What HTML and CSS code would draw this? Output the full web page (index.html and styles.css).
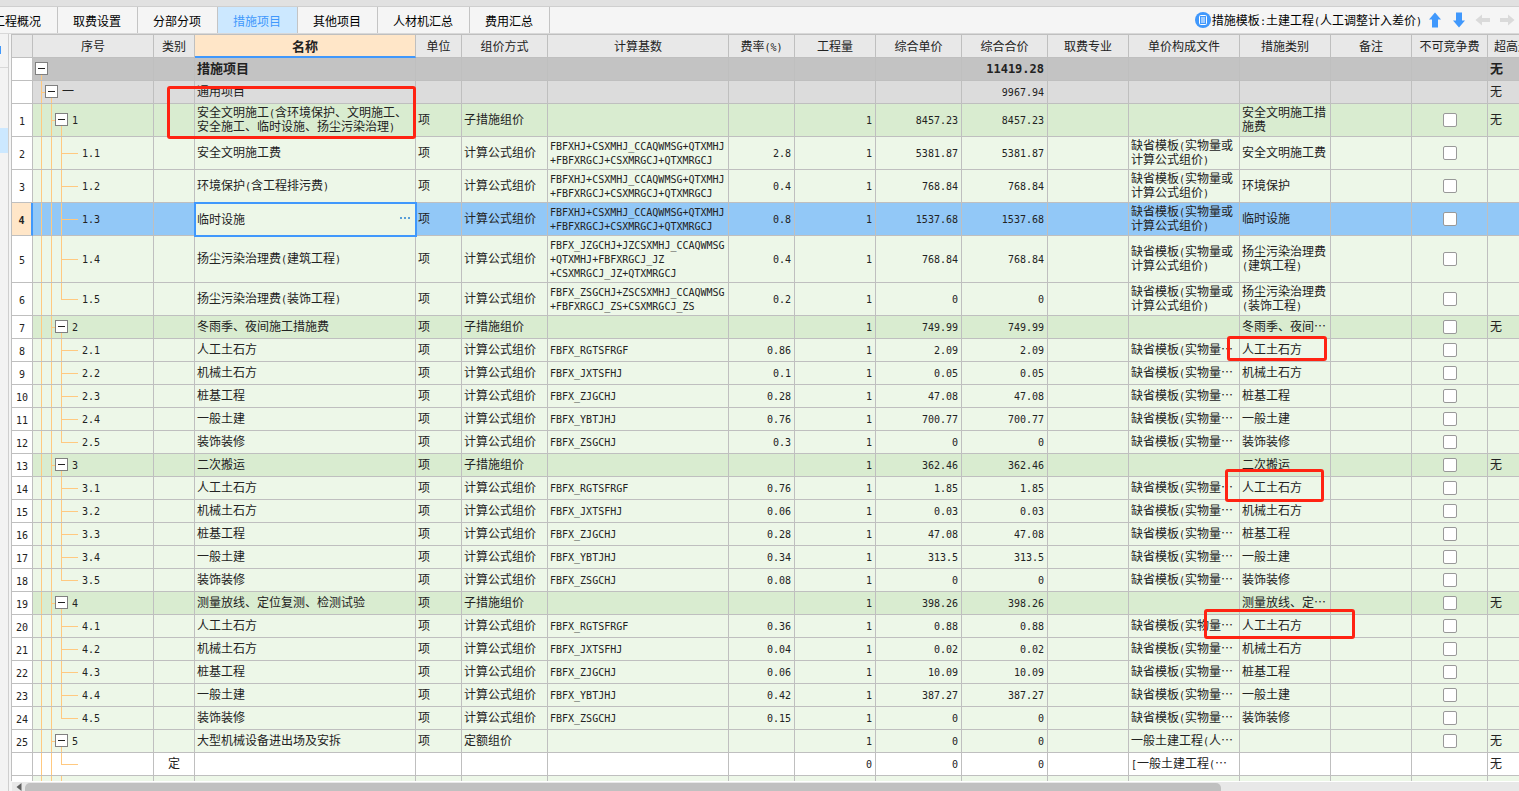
FILE: index.html
```html
<!DOCTYPE html>
<html lang="zh-CN">
<head>
<meta charset="utf-8">
<title>措施项目</title>
<link rel="stylesheet" href="styles.css">
</head>
<body>
<div class="titlebar"></div>
<header class="topbar">
  <nav class="tabs">
    <button class="tab" type="button">工程概况</button>
    <button class="tab" type="button">取费设置</button>
    <button class="tab" type="button">分部分项</button>
    <button class="tab active" type="button">措施项目</button>
    <button class="tab" type="button">其他项目</button>
    <button class="tab" type="button">人材机汇总</button>
    <button class="tab" type="button">费用汇总</button>
  </nav>
  <div class="tools">
    <button class="template" type="button">
      <svg width="16" height="16" viewBox="0 0 16 16" aria-hidden="true"><circle cx="8" cy="8" r="8" fill="#4098fc"/><rect x="4.5" y="3.5" width="7" height="9" rx="1" fill="none" stroke="#fff"/><path d="M6 6h4M6 8h4M6 10h4" stroke="#fff"/></svg>
      <span>措施模板<span class="mono">:</span>土建工程<span class="mono">(</span>人工调整计入差价<span class="mono">)</span></span>
    </button>
    <button class="arrow" type="button" aria-label="上移"><svg width="16" height="16" viewBox="0 0 16 16"><path d="M8 0.500L14 7.500H11V15.500H5V7.500H2Z" fill="#4098fc"/></svg></button>
    <button class="arrow" type="button" aria-label="下移"><svg width="16" height="16" viewBox="0 0 16 16"><path d="M8 15.500L14 8.500H11V0.500H5V8.500H2Z" fill="#4098fc"/></svg></button>
    <button class="arrow" type="button" aria-label="左移" disabled><svg width="16" height="16" viewBox="0 0 16 16"><path d="M0.500 8L7 2.500V6H15V10H7V13.500Z" fill="#dadada"/></svg></button>
    <button class="arrow" type="button" aria-label="右移" disabled><svg width="16" height="16" viewBox="0 0 16 16"><path d="M15.500 8L9 2.500V6H1V10H9V13.500Z" fill="#dadada"/></svg></button>
  </div>
</header>
<main class="main">
  <aside class="rail"><div class="rail-head"><i class="rail-dot"></i></div><div class="rail-item"></div></aside>
  <section class="pane">
    <div class="viewport">
      <table class="grid">
        <colgroup>
          <col class="w-row"><col class="w-seq"><col class="w-kind"><col class="w-name"><col class="w-unit"><col class="w-price"><col class="w-base"><col class="w-rate"><col class="w-81"><col class="w-price"><col class="w-price"><col class="w-81"><col class="w-file"><col class="w-cat"><col class="w-81"><col class="w-fee"><col class="w-high">
        </colgroup>
        <thead>
          <tr><th></th><th>序号</th><th>类别</th><th class="current">名称</th><th>单位</th><th>组价方式</th><th>计算基数</th><th>费率<span class="mono">(%)</span></th><th>工程量</th><th>综合单价</th><th>综合合价</th><th>取费专业</th><th>单价构成文件</th><th>措施类别</th><th>备注</th><th>不可竞争费</th><th class="left">超高过高类别</th></tr>
        </thead>
        <tbody id="rows"></tbody>
      </table>
    </div>
    <div class="scrollbar">
      <svg width="6" height="8" viewBox="0 0 6 8" aria-hidden="true"><path d="M5.500 0V8L0.500 4Z" fill="#606060"/></svg>
      <div class="thumb"></div>
    </div>
  </section>
</main>
<div class="mark mark-a"></div>
<div class="mark mark-b"></div>
<div class="mark mark-c"></div>
<div class="mark mark-d"></div>
<script src="grid.js"></script>
</body>
</html>
```
FILE: styles.css
```css
* { box-sizing: border-box; }
body {
  margin: 0;
  height: 100vh;
  display: flex;
  flex-direction: column;
  overflow: hidden;
  background: #f5f5f5;
  color: #222;
  font: 12px/14px "Noto Sans CJK SC", sans-serif;
}
button, input { font: inherit; color: inherit; }
button { border: 0; padding: 0; background: none; }
.mono { font-family: "DejaVu Sans Mono", monospace; font-size: 10px; line-height: 1px; }

.titlebar { height: 7px; flex: none; background: #e1e1e1; border-bottom: 1px solid #cfcfcf; }
.topbar { height: 27px; flex: none; display: flex; justify-content: space-between; border-bottom: 1px solid #d8d8d8; }
.tabs { display: flex; margin-left: -22px; }
.tab { padding: 2px 16px 0 15px; border-right: 1px solid #c4c4c4; white-space: nowrap; color: #000; }
.tab.active { background: #cce8ff; color: #4098fc; }
.tools { display: flex; align-items: center; gap: 8px; padding-right: 4px; color: #000; }
.template { display: flex; align-items: center; gap: 1px; margin-right: -3px; white-space: nowrap; color: #000; }
.arrow { display: flex; width: 16px; height: 16px; }

.main { flex: 1; min-height: 0; display: flex; }
.rail { width: 9px; flex: none; border-right: 1px solid #cfcfcf; background: #f3f3f3; }
.rail-head { height: 34px; padding-top: 12px; border-bottom: 1px solid #d8d8d8; }
.rail-dot { display: block; width: 1px; height: 8px; background: #4098fc; }
.rail-item { height: 25px; margin-top: 60px; background: #cce8ff; }
.pane { flex: 1; min-width: 0; display: flex; flex-direction: column; padding-left: 2px; }
.viewport { flex: 1; min-height: 0; overflow: hidden; border-left: 1px solid #bfbfbf; border-top: 1px solid #bfbfbf; background: #fff; }

.grid { table-layout: fixed; width: 1600px; border-collapse: separate; border-spacing: 0; }
.w-row { width: 21px; }
.w-seq { width: 121px; }
.w-kind { width: 41px; }
.w-name { width: 221px; }
.w-unit { width: 46px; }
.w-price { width: 86px; }
.w-base { width: 181px; }
.w-rate { width: 66px; }
.w-81 { width: 81px; }
.w-file { width: 111px; }
.w-cat { width: 91px; }
.w-fee { width: 76px; }

.grid th, .grid td {
  height: 23px;
  padding: 0 2px 2px;
  border-right: 1px solid #bfbfbf;
  border-bottom: 1px solid #bfbfbf;
  white-space: pre;
  overflow: hidden;
  text-align: left;
  vertical-align: middle;
}
.grid th { padding-bottom: 0; background: #e8e8e8; font-weight: 400; text-align: center; }
.grid th.left { text-align: left; padding-left: 6px; }
.grid th.current { background: #ffe6c8; border-bottom: 2px solid #4098fc; font-weight: 700; font-size: 13px; }
.grid tr.h33 td { height: 33px; }
.grid tr.h47 td { height: 47px; }
.grid td.num { text-align: right; padding-right: 3px; }
.grid td.mid { text-align: center; }
.grid td.no { background: #fff; text-align: center; padding: 0; }
.grid td.box { padding: 0; }

.root td { background-color: #c3c3c3; font-weight: 700; font-size: 13px; }
.root .mono { font-size: 12px; }
.part td { background-color: #dcdcdc; }
.group td { background-color: #d9ecd0; }
.item td { background-color: #edf7e8; }
.plain td { background-color: #fff; }
.selected td { background-color: #92c8f7; }
.grid .selected td.no { background: #ffe6c8; font-weight: 700; border-right: 2px solid #4098fc; }
.grid .selected td.editing { background: #edf7e8; outline: 2px solid #4098fc; outline-offset: -1px; }
.editor { display: flex; align-items: center; }
.editor input { flex: 1; min-width: 0; height: 20px; padding: 0; border: 0; outline: 0; background: transparent; }
.more { display: flex; padding: 0 2px; }

/* Tree guides are painted as cell backgrounds. */
.grid td.tree {
  --g: linear-gradient(#ffc980, #ffc980);
  background-image: var(--g), var(--g), var(--g), var(--g);
  background-repeat: no-repeat;
}
.grid .t0 { padding-left: 2px; background-size: 1px 50%, 0 0, 0 0, 0 0; background-position: 8px 100%; }
.grid .t1 { padding-left: 12px; background-size: 1px 100%, 1px 50%, 5px 1px, 0 0; background-position: 8px 0, 18px 100%, 8px 50%, 0 0; }
.grid .t2 { padding-left: 22px; background-size: 1px 100%, 1px 100%, 1px 50%, 5px 1px; background-position: 8px 0, 18px 0, 28px 100%, 18px 50%; }
.grid .t3 { padding-left: 49px; background-size: 1px 100%, 1px 100%, 1px 100%, 17px 1px; background-position: 8px 0, 18px 0, 28px 0, 28px 50%; }
.grid .t3.last { background-size: 1px 100%, 1px 100%, 1px 50%, 17px 1px; }
.node { display: flex; align-items: center; gap: 4px; }
.toggle { position: relative; width: 13px; height: 13px; flex: none; border: 1px solid #808080; background: #fff; }
.toggle::after { content: ""; position: absolute; left: 2px; right: 2px; top: 5px; height: 1px; background: #222; }

.check { appearance: none; display: block; width: 14px; height: 14px; margin: 0 auto; border: 1px solid #999; border-radius: 2px; background: #fff; }

.scrollbar { height: 10px; flex: none; display: flex; align-items: flex-end; gap: 3px; padding: 0 8px 0 4px; margin-left: 1px; background: #e8e8e8; border-top: 1px solid #fff; overflow: hidden; }
.thumb { width: 80%; height: 8px; border-radius: 5px 5px 0 0; background: #c0c0c0; }

.mark { position: absolute; border: 3px solid #ff2312; border-radius: 3px; pointer-events: none; }
.mark-a { left: 167px; top: 86px; width: 249px; height: 53px; }
.mark-b { left: 1227px; top: 336px; width: 100px; height: 25px; }
.mark-c { left: 1225px; top: 469px; width: 99px; height: 33px; }
.mark-d { left: 1204px; top: 609px; width: 151px; height: 30px; }
```
FILE: grid.js
```js
const FORMULA = "计算公式组价";
const FULL = "缺省模板(实物量或\n计算公式组价)";
const SHORT = "缺省模板(实物量…";
const BASE = "FBFXHJ+CSXMHJ_CCAQWMSG+QTXMHJ\n+FBFXRGCJ+CSXMRGCJ+QTXMRGCJ";

// style, level, seq, kind, name, unit, method, base, rate, qty, price, total, file, category, checkbox, high
const rows = [
  ["root", 0, "", "", "措施项目", "", "", "", "", "", "", "11419.28", "", "", 0, "无"],
  ["part", 1, "一", "", "通用项目", "", "", "", "", "", "", "9967.94", "", "", 0, "无"],
  ["group h33", 2, "1", "", "安全文明施工(含环境保护、文明施工、\n安全施工、临时设施、扬尘污染治理)", "项", "子措施组价", "", "", "1", "8457.23", "8457.23", "", "安全文明施工措\n施费", 1, "无"],
  ["item h33", 3, "1.1", "", "安全文明施工费", "项", FORMULA, BASE, "2.8", "1", "5381.87", "5381.87", FULL, "安全文明施工费", 1, ""],
  ["item h33", 3, "1.2", "", "环境保护(含工程排污费)", "项", FORMULA, BASE, "0.4", "1", "768.84", "768.84", FULL, "环境保护", 1, ""],
  ["selected h33", 3, "1.3", "", "临时设施", "项", FORMULA, BASE, "0.8", "1", "1537.68", "1537.68", FULL, "临时设施", 1, ""],
  ["item h47", 3, "1.4", "", "扬尘污染治理费(建筑工程)", "项", FORMULA, "FBFX_JZGCHJ+JZCSXMHJ_CCAQWMSG\n+QTXMHJ+FBFXRGCJ_JZ\n+CSXMRGCJ_JZ+QTXMRGCJ", "0.4", "1", "768.84", "768.84", FULL, "扬尘污染治理费\n(建筑工程)", 1, ""],
  ["item h33", 4, "1.5", "", "扬尘污染治理费(装饰工程)", "项", FORMULA, "FBFX_ZSGCHJ+ZSCSXMHJ_CCAQWMSG\n+FBFXRGCJ_ZS+CSXMRGCJ_ZS", "0.2", "1", "0", "0", FULL, "扬尘污染治理费\n(装饰工程)", 1, ""]
];

const works = [["人工土石方", "FBFX_RGTSFRGF"], ["机械土石方", "FBFX_JXTSFHJ"], ["桩基工程", "FBFX_ZJGCHJ"], ["一般土建", "FBFX_YBTJHJ"], ["装饰装修", "FBFX_ZSGCHJ"]];
const groups = [
  ["2", "冬雨季、夜间施工措施费", "冬雨季、夜间…", "749.99", ["0.86", "0.1", "0.28", "0.76", "0.3"], ["2.09", "0.05", "47.08", "700.77", "0"]],
  ["3", "二次搬运", "二次搬运", "362.46", ["0.76", "0.06", "0.28", "0.34", "0.08"], ["1.85", "0.03", "47.08", "313.5", "0"]],
  ["4", "测量放线、定位复测、检测试验", "测量放线、定…", "398.26", ["0.36", "0.04", "0.06", "0.42", "0.15"], ["0.88", "0.02", "10.09", "387.27", "0"]]
];
for (const [no, name, category, total, rates, prices] of groups) {
  rows.push(["group", 2, no, "", name, "项", "子措施组价", "", "", "1", total, total, "", category, 1, "无"]);
  works.forEach(([work, base], i) => {
    rows.push(["item", i === 4 ? 4 : 3, `${no}.${i + 1}`, "", work, "项", FORMULA, base, rates[i], "1", prices[i], prices[i], SHORT, work, 1, ""]);
  });
}
rows.push(["item", 2, "5", "", "大型机械设备进出场及安拆", "项", "定额组价", "", "", "1", "0", "0", "一般土建工程(人…", "", 1, "无"]);
rows.push(["plain", 4, "", "定", "", "", "", "", "", "0", "0", "0", "[一般土建工程(…", "", 0, "无"]);
rows.push(["item", 4, "", "", "", "", "", "", "", "", "", "", "", "", 0, ""]);

const text = s => s.replace(/[ -~]+/g, m => `<span class="mono">${m}</span>`);
const cell = (s, cls = "") => `<td class="${cls}">${text(s)}</td>`;

function treeCell(level, seq) {
  if (level > 2) return cell(seq, level === 4 ? "tree t3 last" : "tree t3");
  return `<td class="tree t${level}"><div class="node"><button class="toggle" type="button" aria-label="折叠"></button><span>${text(seq)}</span></div></td>`;
}

function nameCell(style, name) {
  if (!style.startsWith("selected")) return cell(name);
  return `<td class="editing"><div class="editor"><input type="text" aria-label="名称" value="${name}"><button class="more" type="button" aria-label="更多"><svg width="11" height="2" viewBox="0 0 11 2"><path d="M0 1h2M4 1h2M8 1h2" stroke="#5a9fd8" stroke-width="2"/></svg></button></div></td>`;
}

let number = 0;
document.getElementById("rows").innerHTML = rows.map(r => {
  const [style, level, seq, kind, name, unit, method, base, rate, qty, price, total, file, category, box, high] = r;
  const no = box ? String(++number) : "";
  const check = box ? `<input class="check" type="checkbox" aria-label="不可竞争费 ${no}">` : "";
  return `<tr class="${style}">` + cell(no, "no") + treeCell(level, seq) + cell(kind, "mid") + nameCell(style, name)
    + cell(unit) + cell(method) + cell(base) + cell(rate, "num") + cell(qty, "num") + cell(price, "num") + cell(total, "num")
    + cell("") + cell(file) + cell(category) + cell("") + `<td class="box">${check}</td>` + cell(high) + "</tr>";
}).join("");
```
